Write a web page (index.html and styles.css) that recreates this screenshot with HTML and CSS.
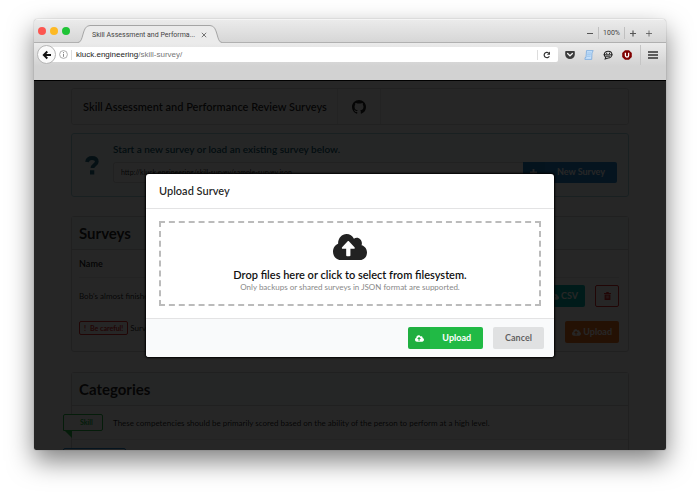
FILE: index.html
```html
<!DOCTYPE html>
<html lang="en">
<head>
<meta charset="utf-8">
<title>Skill Assessment and Performance Review Surveys</title>
<link rel="stylesheet" href="styles.css">
</head>
<body>
<svg class="sprite" aria-hidden="true">
  <symbol id="cloud" viewBox="0 32 640 448"><path d="M537.6 226.6c4.1-10.7 6.4-22.4 6.4-34.6 0-53-43-96-96-96-19.7 0-38.1 6-53.3 16.2C367 64.2 315.3 32 256 32c-88.4 0-160 71.6-160 160 0 2.7.1 5.4.2 8.1C40.2 219.8 0 273.2 0 336c0 79.5 64.5 144 144 144h368c70.7 0 128-57.3 128-128 0-61.9-44-113.6-102.4-125.4zM393.4 288H328v112c0 8.8-7.2 16-16 16h-48c-8.8 0-16-7.2-16-16V288h-65.4c-14.3 0-21.4-17.2-11.3-27.4l105.4-105.4c6.2-6.2 16.4-6.2 22.6 0l105.4 105.4c10.1 10.1 2.9 27.4-11.3 27.4z"/></symbol>
</svg>
<div class="window">
  <header class="chrome">
    <div class="tabs">
      <div class="lights"><span class="light red"></span><span class="light amber"></span><span class="light green"></span></div>
      <div class="tab">
        <svg class="tab-end" viewBox="0 0 12 18"><path class="tab-fill" d="M0 17.5C5 17.5 4 1 12 .5V18H0z"/><path class="tab-line" d="M0 17.5C6 17.5 3.500 .5 12 .5"/></svg>
        <div class="tab-body"><span class="tab-title">Skill Assessment and Performa...</span>
          <button class="bare" aria-label="Close tab"><svg width="6" height="6" viewBox="0 0 6 6"><path class="stroke thin" d="M.8.8l4.400 4.400M5.200.8L.8 5.200"/></svg></button></div>
        <svg class="tab-end" viewBox="0 0 12 18"><path class="tab-fill" d="M12 17.5C7 17.5 8 1 0 .5V18H12z"/><path class="tab-line" d="M12 17.5C6 17.5 8.500 .5 0 .5"/></svg>
      </div>
      <div class="zoom">
        <button class="bare" aria-label="Zoom out"><svg width="8" height="8" viewBox="0 0 8 8"><path class="stroke" d="M1 4.500h6"/></svg></button>
        <span class="zoom-level">100%</span>
        <button class="bare" aria-label="Zoom in"><svg width="8" height="8" viewBox="0 0 8 8"><path class="stroke" d="M1 4.500h6M4 1.500v6"/></svg></button>
        <button class="bare add-tab" aria-label="Add tab"><svg width="8" height="8" viewBox="0 0 8 8"><path class="stroke thin" d="M1 4.500h6M4 1.500v6"/></svg></button>
      </div>
    </div>
    <div class="toolbar">
      <button class="back" aria-label="Back"><svg width="10" height="10" viewBox="0 0 10 10"><path d="M9 5H2.500M5.300 1.500L1.800 5l3.500 3.500" fill="none" stroke="#111" stroke-width="1.900"/></svg></button>
      <div class="address">
        <svg width="9" height="9" viewBox="0 0 9 9"><circle cx="4.500" cy="4.500" r="3.900" fill="none" stroke="#999" stroke-width=".8"/><path d="M4.500 3.900v2.900M4.500 2.100v1" stroke="#888"/></svg>
        <a class="url" href="#">kluck.engineering<span>/skill-survey/</span></a>
        <button class="bare reload" aria-label="Reload"><svg width="8" height="8" viewBox="0 0 8 8"><path d="M5.600 1.900A2.700 2.700 0 1 0 6.300 5.200" fill="none" stroke="#333" stroke-width="1.200"/><path d="M7 .5v3.300H3.900z" fill="#333"/></svg></button>
      </div>
      <div class="extensions">
        <button class="bare" aria-label="Pocket"><svg width="10" height="10" viewBox="0 0 10 10"><path d="M1 .9h8a.8.8 0 0 1 .8.8v2.800a4.800 4.500 0 0 1-9.600 0V1.700A.8.8 0 0 1 1 .9z" fill="#3b3b3b"/><path d="M2.600 3.500L5 5.800l2.400-2.300" fill="none" stroke="#eee" stroke-width="1.300" stroke-linecap="round"/></svg></button>
        <button class="bare" aria-label="Scripts"><svg width="10" height="10" viewBox="0 0 10 10"><path d="M2.500.6h6.700L8 3 7.700 9.400H.9L1.200 7.500H2z" fill="#c5e0fa" stroke="#78a9dd" stroke-width=".8"/><path d="M3.300 3h3.700M3.100 4.700h3.700M3 6.300h3.500" stroke="#8bb9e8" stroke-width=".7"/></svg></button>
        <button class="bare" aria-label="Chat"><svg width="10" height="10" viewBox="0 0 10 10"><path d="M5.200 1.200c2.300 0 3.700 1.500 3.700 3.300S7.400 8 5.200 8L2.200 9l.5-1.700C1.700 6.600 1.300 5.700 1.300 4.500c0-1.800 1.600-3.300 3.900-3.300z" fill="#ddd" stroke="#222" stroke-width="1.100"/><path d="M.6 4.800h8.900M3 6.200h4.200" stroke="#222"/><path d="M3.200 3.300h1M6 3.300h1" stroke="#222" stroke-width="1.300"/></svg></button>
        <button class="bare" aria-label="uBlock"><svg width="10" height="10" viewBox="0 0 10 10"><path d="M3 .2h4L9.800 3v4L7 9.800H3L.2 7V3z" fill="#800000"/><path d="M3.400 2.700v2.700a1.600 1.600 0 0 0 3.200 0V2.700" fill="none" stroke="#fff" stroke-width="1.300"/></svg></button>
      </div>
      <button class="bare menu-button" aria-label="Menu"><svg width="10" height="8" viewBox="0 0 10 8"><path d="M0 1h10M0 4h10M0 7h10" stroke="#333" stroke-width="1.300"/></svg></button>
    </div>
  </header>
  <div class="viewport">
    <main class="page">
      <nav class="menu">
        <h1 class="menu-item brand">Skill Assessment and Performance Review Surveys</h1>
        <a class="menu-item" href="#" aria-label="GitHub"><svg width="14" height="14" viewBox="0 0 16 16"><path d="M8 0C3.580 0 0 3.580 0 8c0 3.540 2.290 6.530 5.470 7.590.4.070.550-.170.550-.380 0-.190-.010-.820-.010-1.490-2.010.370-2.530-.490-2.690-.940-.090-.230-.480-.940-.820-1.130-.280-.150-.680-.520-.010-.530.630-.010 1.080.580 1.230.820.720 1.210 1.870.870 2.330.660.070-.520.280-.870.510-1.070-1.780-.200-3.640-.890-3.640-3.950 0-.870.310-1.590.820-2.150-.080-.200-.360-1.020.080-2.120 0 0 .670-.210 2.200.820.640-.180 1.320-.270 2-.270s1.360.090 2 .270c1.530-1.040 2.200-.820 2.200-.820.440 1.100.160 1.920.080 2.120.510.560.820 1.270.820 2.150 0 3.070-1.870 3.750-3.650 3.950.290.250.540.730.540 1.480 0 1.070-.010 1.930-.010 2.200 0 .210.150.460.550.380A8.010 8.010 0 0 0 16 8c0-4.420-3.580-8-8-8z"/></svg></a>
      </nav>
      <section class="message">
        <svg class="question" width="14" height="19" viewBox="0 0 14 19"><path d="M2 6C2.500 3.500 4.300 2 7 2c3 0 4.800 1.500 4.800 3.700 0 3-4.300 3-4.300 6.300" fill="none" stroke="#276f86" stroke-width="3.800"/><path d="M5 14.300h4.300v4.200H5z" fill="#276f86"/></svg>
        <div class="message-body">
          <label class="message-title" for="survey-url">Start a new survey or load an existing survey below.</label>
          <div class="action-input">
            <input id="survey-url" type="text" value="http://kluck.engineering/skill-survey/sample-survey.json">
            <button class="button labeled blue"><span class="button-icon"><svg width="7" height="7" viewBox="0 0 7 7"><path d="M3.500 0v7M0 3.500h7" stroke="#fff" stroke-width="1.800"/></svg></span><span class="button-text">New Survey</span></button>
          </div>
        </div>
      </section>
      <section class="segment">
        <h2 class="segment-title">Surveys</h2>
        <table class="surveys">
          <thead><tr><th colspan="2">Name</th></tr></thead>
          <tbody>
            <tr><td>Bob's almost finished</td><td class="actions"><button class="button teal"><svg width="9" height="7"><use href="#cloud"/></svg>CSV</button><button class="button outline" aria-label="Delete"><svg width="7" height="8" viewBox="0 0 7 8"><path d="M0 1h2l.5-1h2L5 1h2v1H0zM.6 2.500h5.800V8H.6z" fill="#db2828"/><path d="M2.300 3.500v3M3.500 3.500v3M4.700 3.500v3" stroke="#fff" stroke-width=".5"/></svg></button></td></tr>
            <tr><td class="upper"><span class="tag"><b>!</b>Be careful!</span> Survey</td><td class="actions"><button class="button orange"><svg width="9" height="7"><use href="#cloud"/></svg>Upload</button></td></tr>
          </tbody>
        </table>
      </section>
      <section class="segment">
        <h2 class="segment-title">Categories</h2>
        <div class="category"><span class="ribbon skill">Skill</span><p>These competencies should be primarily scored based on the ability of the person to perform at a high level.</p></div>
        <div class="category"><span class="ribbon next"></span></div>
      </section>
    </main>
    <div class="dimmer">
      <div class="modal" role="dialog" aria-labelledby="modal-title">
        <h2 class="modal-title" id="modal-title">Upload Survey</h2>
        <div class="modal-content">
          <button class="dropzone">
            <svg width="34" height="26" viewBox="0 32 640 448" preserveAspectRatio="none"><use href="#cloud" x="0" y="32" width="640" height="448"/></svg>
            <strong>Drop files here or click to select from filesystem.</strong>
            <small>Only backups or shared surveys in JSON format are supported.</small>
          </button>
        </div>
        <div class="modal-actions">
          <button class="button labeled green"><span class="button-icon"><svg width="9" height="7"><use href="#cloud"/></svg></span><span class="button-text">Upload</span></button>
          <button class="button grey">Cancel</button>
        </div>
      </div>
    </div>
  </div>
</div>
</body>
</html>
```
FILE: styles.css
```css
* { box-sizing: border-box; }

body {
  margin: 0;
  height: 100vh;
  padding: 19px 34px 48px;
  background: #fff;
  color: rgba(0, 0, 0, .87);
  font-family: Lato, "Liberation Sans", sans-serif;
  font-size: 9px;
  line-height: 12px;
}

h1, h2, p { margin: 0; }
button { font: inherit; color: inherit; }
svg { display: block; flex: none; fill: currentColor; }
a { color: inherit; text-decoration: none; }
.sprite { display: none; }

.window {
  display: flex;
  flex-direction: column;
  height: 100%;
  overflow: hidden;
  border-radius: 4px 4px 2px 2px;
  box-shadow: 0 0 1px rgba(0, 0, 0, .5), 0 11px 26px rgba(0, 0, 0, .5);
}

/* Browser chrome */
.chrome {
  height: 62px;
  flex: none;
  padding-bottom: 14px;
  background: #d2d2d2;
  border-bottom: 1px solid #000;
  font-family: Roboto, sans-serif;
  color: #444;
}
.tabs {
  display: flex;
  align-items: flex-end;
  height: 24px;
  background: linear-gradient(#ebebeb, #d6d6d6);
  border-top: 1px solid #f5f5f5;
  border-bottom: 1px solid #b0b0b0;
}
.lights { display: flex; gap: 4px; padding: 0 8px 7px 4px; }
.light { width: 8px; height: 8px; border-radius: 50%; }
.red { background: #fc5650; }
.amber { background: #fdb924; }
.green { background: #1fc436; }
.tab { display: flex; height: 18px; margin-bottom: -1px; }
.tab-end { width: 12px; height: 18px; }
.tab-fill { fill: #ebebeb; }
.tab-line { fill: none; stroke: #a5a5a5; }
.tab-body {
  display: flex;
  align-items: center;
  gap: 6px;
  padding: 0 3px 0 2px;
  background: #ebebeb;
  border-top: 1px solid #a5a5a5;
}
.tab-title { min-width: 101px; font-size: 7px; white-space: nowrap; }
.bare { display: flex; padding: 0; border: 0; background: none; }
.stroke { fill: none; stroke: #555; stroke-width: 1.200; }
.thin { stroke-width: .8; }
.zoom { display: flex; align-items: center; gap: 4px; margin-left: auto; padding: 0 13px 3px; }
.add-tab { margin-left: 4px; }
.zoom-level { padding: 0 4px; border: solid #c0c0c0; border-width: 0 1px; font-size: 7px; }

.toolbar {
  display: flex;
  align-items: center;
  height: 23px;
  padding: 0 8px 0 3px;
  background: linear-gradient(#ebebeb, #d2d2d2);
}
.back {
  display: grid;
  place-items: center;
  width: 19px;
  height: 19px;
  margin-right: -5px;
  padding: 0;
  z-index: 1;
  border: 1px solid #b5b5b5;
  border-radius: 50%;
  background: #fafafa;
}
.address {
  display: flex;
  flex: 1;
  align-items: center;
  height: 15px;
  padding: 0 7px 0 8px;
  border-radius: 2px;
  background: #fff;
}
.url {
  flex: 1;
  margin-left: 3px;
  padding-left: 4px;
  border-left: 1px solid #ddd;
  font-family: "Liberation Sans", sans-serif;
  font-size: 8px;
  line-height: 10px;
  color: #222;
}
.url span { color: #777; }
.reload { padding: 1px 0 1px 5px; border-left: 1px solid #ddd; }
.extensions { display: flex; gap: 9px; padding: 0 8px 0 7px; }
.menu-button { padding: 6px 0 6px 7px; border-left: 1px solid #c5c5c5; }

/* Page */
.viewport { position: relative; flex: 1; overflow: hidden; background: #fff; }
.page { padding: 7px 37px 0; font-size: 8px; }
.menu {
  display: flex;
  height: 37px;
  margin-bottom: 8px;
  border: 1px solid #dededf;
  border-radius: 3px;
}
.menu-item {
  display: flex;
  align-items: center;
  padding: 0 14px;
  border-right: 1px solid #e8e8e8;
}
.brand { padding: 0 10px 0 11px; font-size: 11px; font-weight: 600; }

.message {
  display: flex;
  align-items: center;
  gap: 14px;
  height: 64px;
  margin-bottom: 19px;
  padding: 0 11px 0 13px;
  border: 1px solid #a9d5de;
  border-radius: 3px;
  background: #f8ffff;
}
.message-body { flex: 1; padding-bottom: 3px; }
.message-title { display: block; margin-bottom: 6px; font-size: 10px; line-height: 14px; margin-top: -3px; font-weight: 600; color: #0e566c; }
.action-input { display: flex; }
.action-input input {
  flex: 1;
  min-width: 0;
  height: 21px;
  padding: 0 7px;
  border: 1px solid #ddd;
  border-right: 0;
  border-radius: 3px 0 0 3px;
  font: 7px Lato, sans-serif;
  color: rgba(0, 0, 0, .87);
}

.button {
  display: flex;
  align-items: center;
  justify-content: center;
  gap: 2px;
  height: 22px;
  padding: 0 7px;
  border: 0;
  border-radius: 2px;
  font-size: 9px;
  font-weight: 700;
  color: #fff;
}
.labeled { gap: 0; padding: 0; overflow: hidden; }
.button-icon { display: grid; place-items: center; width: 22px; height: 100%; background: rgba(0, 0, 0, .06); }
.button-text { padding: 0 12px; }
.blue { height: 21px; border-radius: 0 2px 2px 0; background: #2185d0; }
.teal { background: #00b5ad; }
.orange { background: #f2711c; }
.green.button { background: #21ba45; }
.grey { padding: 0 12px; background: #e0e1e2; color: rgba(0, 0, 0, .6); }
.outline { width: 24px; border: 1px solid #db2828; background: none; }

.segment { margin-bottom: 20px; border: 1px solid #d4d4d5; border-radius: 3px; }
.segment-title {
  padding: 0 7px;
  border-bottom: 1px solid #d4d4d5;
  background: #f9fafb;
  font-size: 15px;
  line-height: 32px;
}
.surveys { width: 100%; padding: 0 9px 1px 7px; border-spacing: 0; }
.surveys th { height: 28px; padding: 0; border-bottom: 1px solid #e8e8e8; font-size: 9px; text-align: left; }
.surveys td { height: 36px; padding: 0; }
.surveys .upper { padding-bottom: 8px; }
.surveys .actions { display: flex; align-items: center; justify-content: flex-end; gap: 10px; }
.tag {
  display: inline-flex;
  gap: 4px;
  padding: 0 4px;
  border: 1px solid #db2828;
  border-radius: 2px;
  font-size: 7px;
  font-weight: 700;
  color: #db2828;
}
.category {
  display: flex;
  align-items: center;
  gap: 10px;
  height: 34px;
  border-bottom: 1px solid #e8e8e8;
}
.ribbon {
  position: relative;
  width: 40px;
  height: 17px;
  margin-left: -9px;
  padding-left: 16px;
  border: 1px solid #21ba45;
  border-radius: 2px 2px 2px 0;
  background: #fff;
  font-size: 7px;
  line-height: 15px;
  font-weight: 700;
  color: #21ba45;
}
.ribbon::after {
  content: "";
  position: absolute;
  top: 100%;
  left: 0;
  border: 4px solid transparent;
  border-top-color: #21ba45;
  border-right-color: #21ba45;
}
.next { width: 63px; border-color: #2185d0; }

/* Modal */
.dimmer {
  position: absolute;
  inset: 0;
  display: grid;
  place-items: center;
  background: rgba(0, 0, 0, .85);
}
.modal {
  width: 408px;
  max-width: 90%;
  overflow: hidden;
  border-radius: 3px;
  background: #fff;
  box-shadow: 0 0 2px 1px #000;
}
.modal-title { padding: 0 13px; border-bottom: 1px solid #e3e3e4; font-size: 11px; line-height: 34px; font-weight: 600; }
.modal-content { padding: 12px 13px; }
.dropzone {
  display: flex;
  flex-direction: column;
  align-items: center;
  width: 100%;
  padding: 11px 0;
  border: 2px dashed #bbb;
  background: none;
  color: #222;
}
.dropzone strong { margin-top: 9px; font-size: 11px; line-height: 12px; font-weight: 600; color: #111; }
.dropzone small { font-size: 8px; line-height: 12px; color: #888; }
.modal-actions {
  display: flex;
  justify-content: flex-end;
  gap: 10px;
  padding: 8px 10px;
  border-top: 1px solid #e3e3e4;
  background: #f9fafb;
}
```
